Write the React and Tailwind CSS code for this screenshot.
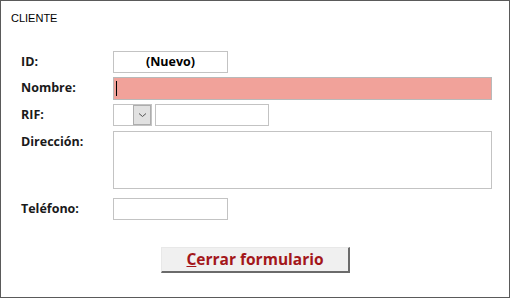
export default function App() {
  const label = "w-[92px] shrink-0 h-[22px] leading-[22px] text-[12.5px] font-bold text-[#1a1a1a]";
  const box = "border border-[#c3c3c3] bg-white";
  return (
    <div className="w-[512px] h-[298px] bg-white" style={{ fontFamily: '"Open Sans", "Noto Sans", sans-serif' }}>
      <div className="w-[510px] h-[298px] border border-[#5a5a5a] bg-white flex flex-col">
        <div className="pl-[10px] pt-[9px] h-[50px] text-[11px] text-black" style={{ fontFamily: '"Liberation Sans", sans-serif' }}>
          CLIENTE
        </div>
        <div className="pl-[20px] flex flex-col">
          {/* ID */}
          <div className="flex items-start">
            <div className={label}>ID:</div>
            <div className={`${box} w-[115px] h-[22px] flex items-center justify-center text-[12.5px] font-bold text-black`}>
              (Nuevo)
            </div>
          </div>
          {/* Nombre */}
          <div className="flex items-start mt-[4px]">
            <div className={label}>Nombre:</div>
            <div className="w-[379px] h-[23px] border border-[#b9b9b9] bg-[#f1a29a] flex items-center pl-[2px]">
              <div className="w-[1px] h-[15px] bg-black" />
            </div>
          </div>
          {/* RIF */}
          <div className="flex items-start mt-[4px]">
            <div className={label}>RIF:</div>
            <div className={`${box} w-[39px] h-[22px] flex justify-end`}>
              <div className="w-[18px] h-full bg-[#e1e1e1] border border-[#adadad] flex items-center justify-center">
                <svg width="9" height="6" viewBox="0 0 9 6">
                  <path d="M1 1.5 L4.5 4.5 L8 1.5" fill="none" stroke="#555" strokeWidth="1" />
                </svg>
              </div>
            </div>
            <div className={`${box} w-[114px] h-[22px] ml-[3px]`} />
          </div>
          {/* Dirección */}
          <div className="flex items-start mt-[5px]">
            <div className={label}>Dirección:</div>
            <div className={`${box} w-[379px] h-[58px]`} />
          </div>
          {/* Teléfono */}
          <div className="flex items-start mt-[9px]">
            <div className={label}>Teléfono:</div>
            <div className={`${box} w-[115px] h-[22px]`} />
          </div>
        </div>
        <div className="flex pl-[160px] mt-[27px]">
          <button
            className="w-[189px] h-[26px] bg-[#f0f0f0] border-t border-l border-t-[#e8e8e8] border-l-[#e8e8e8] border-r-2 border-b-2 border-r-[#6b6b6b] border-b-[#6b6b6b] flex items-center justify-center text-[15.5px] font-bold text-[#a3161a]"
            style={{ fontFamily: '"Open Sans", sans-serif' }}
          >
            <span><span className="underline">C</span>errar formulario</span>
          </button>
        </div>
      </div>
    </div>
  );
}
